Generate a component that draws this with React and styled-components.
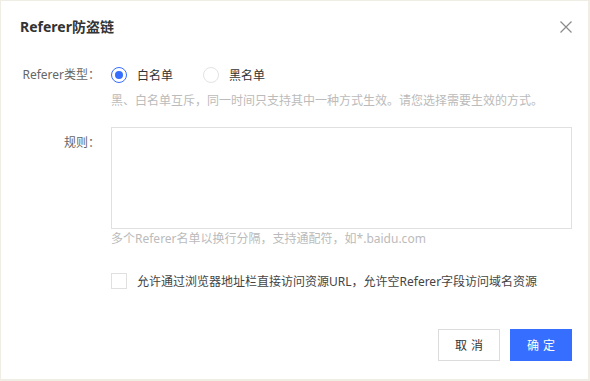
import React, { useState } from "react";
import styled, { createGlobalStyle } from "styled-components";

const Global = createGlobalStyle`
  html, body { margin: 0; padding: 0; background: #f0eee4; }
  body { font-family: "Noto Sans", "Noto Sans CJK SC", sans-serif; }
  * { box-sizing: border-box; }
`;

const Page = styled.div`
  width: 590px;
  height: 381px;
  padding: 1px 2px 2px 1px;
`;

const Dialog = styled.div`
  width: 100%;
  height: 100%;
  background: #fff;
  display: flex;
  flex-direction: column;
`;

const Header = styled.div`
  display: flex;
  align-items: center;
  justify-content: space-between;
  padding: 15px 16px 0 19px;
  height: 37px;
`;

const Title = styled.h2`
  margin: 0;
  font-size: 14px;
  line-height: 22px;
  font-weight: 700;
  color: #333;
`;

const CloseButton = styled.button`
  border: 0;
  background: none;
  padding: 0;
  width: 12px;
  height: 12px;
  display: flex;
  cursor: pointer;
  margin-top: -1px;
`;

const Body = styled.div`
  flex: 1;
  padding: 26px 16px 0 0;
  display: grid;
  grid-template-columns: 99px 1fr;
  column-gap: 11px;
  align-content: start;
`;

const Label = styled.div`
  text-align: right;
  font-size: 12px;
  color: #666;
  line-height: ${(p) => p.$lh || 22}px;
  padding-top: ${(p) => p.$pt || 0}px;
  margin-top: ${(p) => p.$mt || 0}px;
`;

const Field = styled.div`
  display: flex;
  flex-direction: column;
  margin-top: ${(p) => p.$mt || 0}px;
`;

const RadioGroup = styled.div`
  display: flex;
  align-items: center;
  height: 22px;
`;

const RadioOption = styled.label`
  display: flex;
  align-items: center;
  gap: 10px;
  margin-right: 30px;
  font-size: 12px;
  color: #333;
  cursor: pointer;
`;

const RadioCircle = styled.span`
  width: 16px;
  height: 16px;
  border-radius: 50%;
  border: 1px solid ${(p) => (p.$checked ? "#366eff" : "#e3e3e3")};
  display: flex;
  align-items: center;
  justify-content: center;
  &::after {
    content: "";
    width: 8px;
    height: 8px;
    border-radius: 50%;
    background: ${(p) => (p.$checked ? "#366eff" : "transparent")};
  }
`;

const Hint = styled.div`
  font-size: 12px;
  color: #bbb;
  line-height: ${(p) => p.$lh || 18}px;
  margin-top: ${(p) => p.$mt || 0}px;
`;

const TextArea = styled.textarea`
  width: 100%;
  height: 102px;
  border: 1px solid #e0e0e0;
  resize: none;
  outline: none;
  font-family: inherit;
  font-size: 12px;
  padding: 6px 8px;
  color: #333;
`;

const CheckRow = styled.label`
  display: flex;
  align-items: center;
  gap: 10px;
  height: 22px;
  font-size: 12px;
  color: #444;
  cursor: pointer;
`;

const CheckBox = styled.span`
  width: 16px;
  height: 16px;
  border: 1px solid #e0e0e0;
  background: #fff;
`;

const Spacer = styled.div``;

const Footer = styled.div`
  display: flex;
  justify-content: flex-end;
  gap: 10px;
  padding: 0 16px 18px 0;
`;

const Button = styled.button`
  width: 62px;
  height: 32px;
  font-family: inherit;
  font-size: 12px;
  letter-spacing: 4px;
  text-indent: 4px;
  cursor: pointer;
  border: 1px solid ${(p) => (p.$primary ? "#366eff" : "#dcdcdc")};
  background: ${(p) => (p.$primary ? "#366eff" : "#fff")};
  color: ${(p) => (p.$primary ? "#fff" : "#333")};
`;

export default function App() {
  const [type, setType] = useState("white");
  return (
    <>
      <Global />
      <Page>
        <Dialog>
          <Header>
            <Title>Referer防盗链</Title>
            <CloseButton aria-label="close">
              <svg width="12" height="12" viewBox="0 0 12 12">
                <path d="M0.5 0.5 L11.5 11.5 M11.5 0.5 L0.5 11.5" stroke="#8a8a8a" strokeWidth="1.2" fill="none" />
              </svg>
            </CloseButton>
          </Header>
          <Body>
            <Label>Referer类型：</Label>
            <Field>
              <RadioGroup>
                <RadioOption onClick={() => setType("white")}>
                  <RadioCircle $checked={type === "white"} />
                  白名单
                </RadioOption>
                <RadioOption onClick={() => setType("black")}>
                  <RadioCircle $checked={type === "black"} />
                  黑名单
                </RadioOption>
              </RadioGroup>
              <Hint $mt={6}>黑、白名单互斥，同一时间只支持其中一种方式生效。请您选择需要生效的方式。</Hint>
            </Field>

            <Label $lh={18} $pt={7} $mt={17}>规则：</Label>
            <Field $mt={17}>
              <TextArea />
              <Hint $lh={20}>多个Referer名单以换行分隔，支持通配符，如*.baidu.com</Hint>
            </Field>

            <Spacer />
            <Field $mt={21}>
              <CheckRow>
                <CheckBox />
                允许通过浏览器地址栏直接访问资源URL，允许空Referer字段访问域名资源
              </CheckRow>
            </Field>
          </Body>
          <Footer>
            <Button>取消</Button>
            <Button $primary>确定</Button>
          </Footer>
        </Dialog>
      </Page>
    </>
  );
}
